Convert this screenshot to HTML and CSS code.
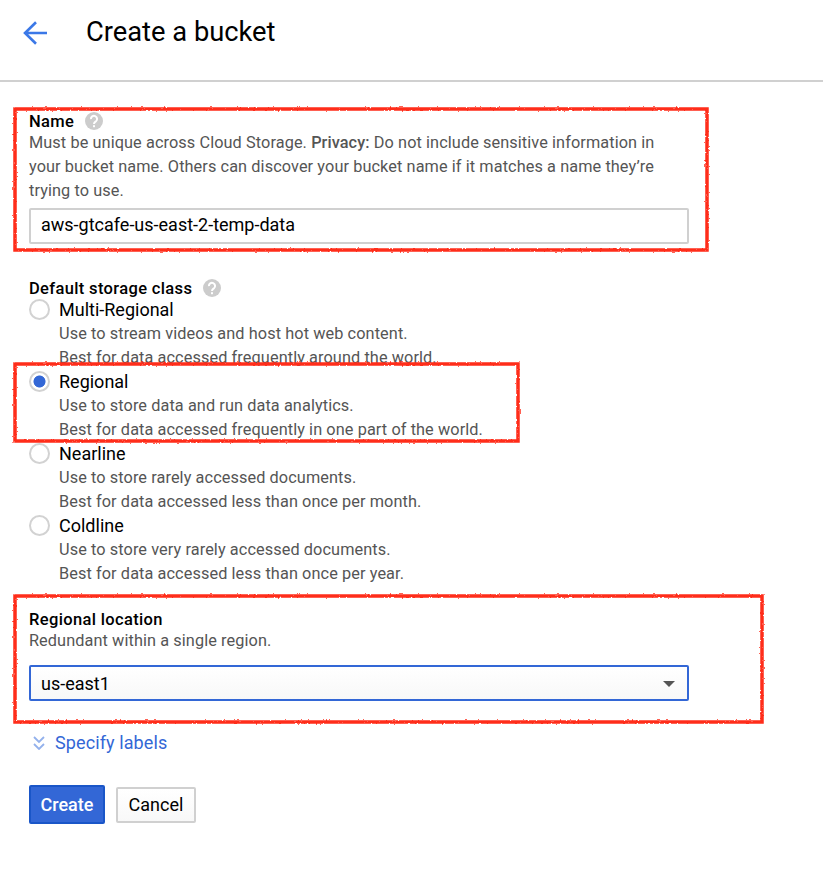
FILE: index.html
```html
<!DOCTYPE html>
<html lang="en">
<head>
<meta charset="utf-8">
<title>Create a bucket</title>
<link rel="stylesheet" href="styles.css">
</head>
<body>
<header class="header">
  <svg class="back" width="26" height="26" viewBox="0 0 26 26"><path d="M25 13H3M14 2.2L3 13l11 10.8" /></svg>
  <h1 class="title">Create a bucket</h1>
</header>
<main class="form">
  <section class="field name-field">
    <div class="label"><span class="with-help">Name</span>
      <svg class="help" width="18" height="18" viewBox="0 0 18 18"><circle cx="9" cy="9" r="9"/><path d="M5.9 7.1a3.1 3.1 0 1 1 5.1 2.2C9.8 10.2 9 10.5 9 12"/><rect x="8" y="13.2" width="2" height="2"/></svg>
    </div>
    <p class="hint">Must be unique across Cloud Storage. <b>Privacy:</b> Do not include sensitive information in<br>your bucket name. Others can discover your bucket name if it matches a name they’re<br>trying to use.</p>
    <div class="input"><span class="value">aws-gtcafe-us-east-2-temp-data</span></div>
    <svg class="mark mark-name" width="702" height="151"><rect x="5" y="5" width="692" height="141"/></svg>
  </section>

  <section class="field class-field">
    <div class="label"><span class="with-help">Default storage class</span>
      <svg class="help" width="18" height="18" viewBox="0 0 18 18"><circle cx="9" cy="9" r="9"/><path d="M5.9 7.1a3.1 3.1 0 1 1 5.1 2.2C9.8 10.2 9 10.5 9 12"/><rect x="8" y="13.2" width="2" height="2"/></svg>
    </div>
    <div class="option"><span class="radio"></span><div><div class="option-name">Multi-Regional</div><p class="hint">Use to stream videos and host hot web content.<br>Best for data accessed frequently around the world.</p></div></div>
    <div class="option"><span class="radio checked"></span><div><div class="option-name">Regional</div><p class="hint">Use to store data and run data analytics.<br>Best for data accessed frequently in one part of the world.</p></div>
      <svg class="mark mark-regional" width="513" height="87"><rect x="5" y="5" width="503" height="77"/></svg>
    </div>
    <div class="option"><span class="radio"></span><div><div class="option-name">Nearline</div><p class="hint">Use to store rarely accessed documents.<br>Best for data accessed less than once per month.</p></div></div>
    <div class="option"><span class="radio"></span><div><div class="option-name">Coldline</div><p class="hint">Use to store very rarely accessed documents.<br>Best for data accessed less than once per year.</p></div></div>
  </section>

  <section class="field location-field">
    <div class="label"><span>Regional location</span></div>
    <p class="hint">Redundant within a single region.</p>
    <div class="input select"><span class="value">us-east1</span><span class="arrow"></span></div>
    <svg class="mark mark-location" width="757" height="136"><rect x="5" y="5" width="747" height="126"/></svg>
  </section>

  <a class="more"><svg width="12" height="14" viewBox="0 0 12 14"><path d="M1 1l5 5 5-5M1 8l5 5 5-5"/></svg><span>Specify labels</span></a>

  <div class="actions"><button class="btn primary">Create</button><button class="btn">Cancel</button></div>
</main>
<svg class="defs" width="0" height="0"><filter id="rough" filterUnits="userSpaceOnUse" x="0" y="0" width="800" height="160" color-interpolation-filters="sRGB"><feTurbulence type="fractalNoise" baseFrequency="0.5" numOctaves="2" seed="4" result="n"/><feDisplacementMap in="SourceGraphic" in2="n" scale="2.4" xChannelSelector="R" yChannelSelector="G"/></filter></svg>
</body>
</html>
```
FILE: styles.css
```css
* { box-sizing: border-box; }
body { margin: 0; background: #fff; color: #000; font-family: Roboto, "Liberation Sans", sans-serif; font-size: 16px; line-height: 24px; }
h1, p { margin: 0; font-weight: 400; }
.header { height: 82px; border-bottom: 2px solid #d0d0d0; display: flex; align-items: flex-start; padding: 16px 22px; }
.back { margin-top: 4px; fill: none; stroke: #3b78e7; stroke-width: 2.6; }
.title { margin-left: 38px; font-size: 27.3px; line-height: 32px; white-space: nowrap; }
.form { padding: 27px 0 0 29px; width: 689px; }
.field { position: relative; }
.label { display: flex; align-items: center; height: 22px; gap: 11px; font-size: 16.5px; font-weight: 500; line-height: 22px; letter-spacing: .35px; white-space: nowrap; padding-top: 2px; }
.with-help { padding-top: 2px; }
.help { fill: #ccc; }
.help path { fill: none; stroke: #fff; stroke-width: 2; }
.help rect { fill: #fff; }
.hint { color: #555; white-space: nowrap; font-size: 16.3px; letter-spacing: .09px; }
.hint b { font-weight: 500; }
.input { height: 36px; margin-top: 5px; border: 2px solid #d0d0d0; border-radius: 2px; padding: 0 10px 2px; display: flex; align-items: center; justify-content: space-between; font-size: 18px; line-height: 30px; }
.class-field { margin-top: 32px; }
.option { position: relative; display: flex; gap: 9px; height: 72px; }
.radio { width: 21px; height: 21px; border: 2px solid #d2d2d2; border-radius: 50%; margin-top: 1px; flex: none; }
.checked { background: radial-gradient(circle, #3367d6 5.6px, transparent 6.4px); }
.option-name { font-size: 18px; }
.location-field { margin-top: 22px; }
.location-field .hint { margin-top: -1px; }
.location-field .input { margin-top: 12px; }
.input.select { padding: 1px 11px 0 10px; border-color: #3367d6; background: linear-gradient(#fff, #f8f8f8); }
.arrow { border: 6px solid transparent; border-top-color: #555; border-bottom: 0; margin-right: 1px; }
.mark { position: absolute; pointer-events: none; fill: none; stroke: #ff2d1a; stroke-width: 3.5; overflow: visible; }
.mark rect { filter: url(#rough); }
.mark-name { left: -19px; top: -5px; }
.mark-regional { left: -19px; top: -11px; }
.mark-location { left: -19px; top: -17px; }
.more { display: flex; align-items: center; gap: 10px; margin: 30px 0 0 4px; color: #3367d6; font-size: 18px; letter-spacing: .1px; }
.more svg { fill: none; stroke: #93b1ec; stroke-width: 1.8; }
.actions { display: flex; align-items: center; gap: 11px; margin-top: 30px; }
.btn { width: 80px; height: 36px; padding: 0; font: 400 18px/30px Roboto, sans-serif; border: 2px solid #d0d0d0; border-radius: 2px; background: linear-gradient(#fff, #f8f8f8); color: #000; }
.primary { width: 76px; height: 39px; font-weight: 500; color: #fff; border-color: #1a56c8; background: #3367d6; }
.defs { position: absolute; }
```
